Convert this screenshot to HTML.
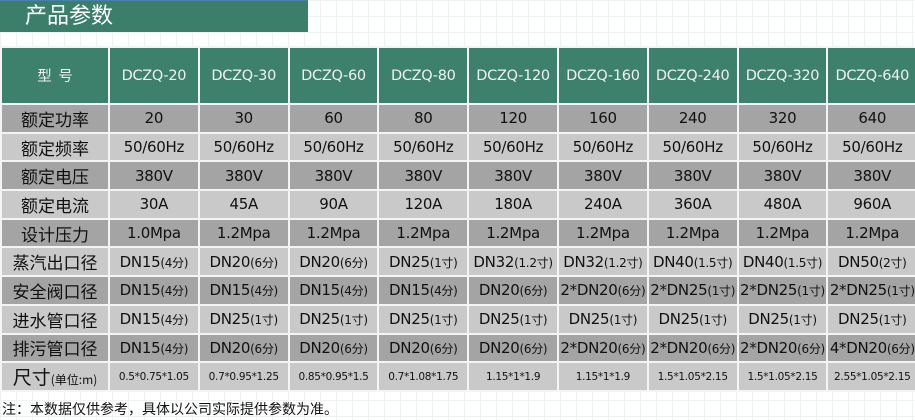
<!DOCTYPE html>
<html><head><meta charset="utf-8"><style>
body{margin:0;width:915px;height:420px;overflow:hidden;background:#fff;
background-image:linear-gradient(#eef2f2 1px,transparent 1px),linear-gradient(90deg,#eef2f2 1px,transparent 1px);background-size:16px 16px;
font-family:"Liberation Sans","Noto Sans CJK SC",sans-serif;position:relative}
.title{position:absolute;left:0;top:0;width:308px;height:32px;background:#3b7f6b;border-top:1px solid #4a7fa8;color:#fff;font-size:22px;line-height:30px;padding-left:25px;box-sizing:border-box}
table{position:absolute;left:0;top:46px;border-collapse:collapse;table-layout:fixed;width:917px}
td{border:2px solid #f4f4f4;text-align:center;padding:0;font-size:15px;color:#111;white-space:nowrap;overflow:hidden;height:26.7px;font-family:"DejaVu Sans","Noto Sans CJK SC",sans-serif;letter-spacing:-0.3px}
tr.h td{background:#3d806b;color:#f0f0f0;height:55px;font-size:14.5px}
tr.d td{background:#a4a4a4}
tr.l td{background:#c9c9c9}
td.f{font-size:17px;font-family:"Noto Sans CJK SC",sans-serif;letter-spacing:0}
.s{font-size:12px}
.z td{font-size:10.5px}
.note{position:absolute;left:2px;top:400px;font-size:14px;color:#111;font-family:"Noto Sans CJK SC",sans-serif;line-height:18px}
</style></head><body>
<div class="title">产品参数</div>
<table>
<colgroup><col style="width:108px"><col span="9" style="width:89.8px"></colgroup>
<tr class="h"><td class="f">型&nbsp;&nbsp;号</td><td>DCZQ-20</td><td>DCZQ-30</td><td>DCZQ-60</td><td>DCZQ-80</td><td>DCZQ-120</td><td>DCZQ-160</td><td>DCZQ-240</td><td>DCZQ-320</td><td>DCZQ-640</td></tr>
<tr class="d"><td class="f">额定功率</td><td>20</td><td>30</td><td>60</td><td>80</td><td>120</td><td>160</td><td>240</td><td>320</td><td>640</td></tr>
<tr class="l"><td class="f">额定频率</td><td>50/60Hz</td><td>50/60Hz</td><td>50/60Hz</td><td>50/60Hz</td><td>50/60Hz</td><td>50/60Hz</td><td>50/60Hz</td><td>50/60Hz</td><td>50/60Hz</td></tr>
<tr class="d"><td class="f">额定电压</td><td>380V</td><td>380V</td><td>380V</td><td>380V</td><td>380V</td><td>380V</td><td>380V</td><td>380V</td><td>380V</td></tr>
<tr class="l"><td class="f">额定电流</td><td>30A</td><td>45A</td><td>90A</td><td>120A</td><td>180A</td><td>240A</td><td>360A</td><td>480A</td><td>960A</td></tr>
<tr class="d"><td class="f">设计压力</td><td>1.0Mpa</td><td>1.2Mpa</td><td>1.2Mpa</td><td>1.2Mpa</td><td>1.2Mpa</td><td>1.2Mpa</td><td>1.2Mpa</td><td>1.2Mpa</td><td>1.2Mpa</td></tr>
<tr class="l"><td class="f">蒸汽出口径</td><td>DN15<span class="s">(4分)</span></td><td>DN20<span class="s">(6分)</span></td><td>DN20<span class="s">(6分)</span></td><td>DN25<span class="s">(1寸)</span></td><td>DN32<span class="s">(1.2寸)</span></td><td>DN32<span class="s">(1.2寸)</span></td><td>DN40<span class="s">(1.5寸)</span></td><td>DN40<span class="s">(1.5寸)</span></td><td>DN50<span class="s">(2寸)</span></td></tr>
<tr class="d"><td class="f">安全阀口径</td><td>DN15<span class="s">(4分)</span></td><td>DN15<span class="s">(4分)</span></td><td>DN15<span class="s">(4分)</span></td><td>DN15<span class="s">(4分)</span></td><td>DN20<span class="s">(6分)</span></td><td>2*DN20<span class="s">(6分)</span></td><td>2*DN25<span class="s">(1寸)</span></td><td>2*DN25<span class="s">(1寸)</span></td><td>2*DN25<span class="s">(1寸)</span></td></tr>
<tr class="l"><td class="f">进水管口径</td><td>DN15<span class="s">(4分)</span></td><td>DN25<span class="s">(1寸)</span></td><td>DN25<span class="s">(1寸)</span></td><td>DN25<span class="s">(1寸)</span></td><td>DN25<span class="s">(1寸)</span></td><td>DN25<span class="s">(1寸)</span></td><td>DN25<span class="s">(1寸)</span></td><td>DN25<span class="s">(1寸)</span></td><td>DN25<span class="s">(1寸)</span></td></tr>
<tr class="d"><td class="f">排污管口径</td><td>DN15<span class="s">(4分)</span></td><td>DN20<span class="s">(6分)</span></td><td>DN20<span class="s">(6分)</span></td><td>DN20<span class="s">(6分)</span></td><td>DN20<span class="s">(6分)</span></td><td>2*DN20<span class="s">(6分)</span></td><td>2*DN20<span class="s">(6分)</span></td><td>2*DN20<span class="s">(6分)</span></td><td>4*DN20<span class="s">(6分)</span></td></tr>
<tr class="l z"><td class="f" style="font-size:19px">尺寸<span class="s">(单位:m)</span></td><td>0.5*0.75*1.05</td><td>0.7*0.95*1.25</td><td>0.85*0.95*1.5</td><td>0.7*1.08*1.75</td><td>1.15*1*1.9</td><td>1.15*1*1.9</td><td>1.5*1.05*2.15</td><td>1.5*1.05*2.15</td><td>2.55*1.05*2.15</td></tr>
</table>
<div class="note">注：本数据仅供参考，具体以公司实际提供参数为准。</div>
</body></html>
